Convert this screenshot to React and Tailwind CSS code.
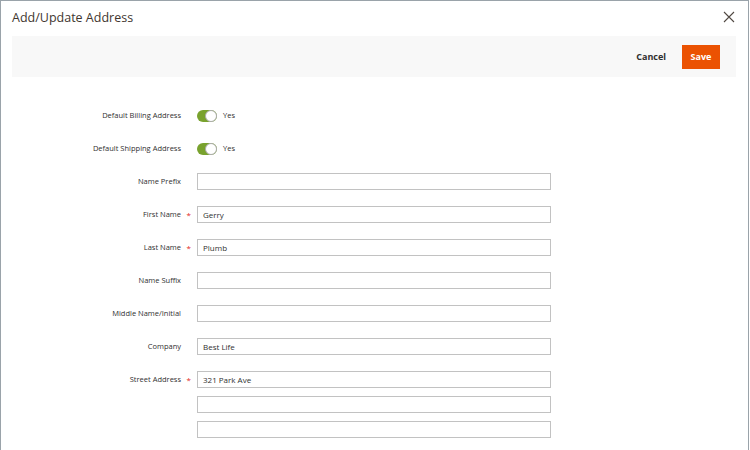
import { useState } from "react";

const Toggle = ({ on }) => (
  <div className="flex items-center gap-[6px]">
    <div
      className={`relative w-[20px] h-[12px] rounded-full ${
        on ? "bg-[#79a22e]" : "bg-[#d6d6d6]"
      }`}
    >
      <div
        className={`absolute top-0 ${
          on ? "right-0" : "left-0"
        } w-[12px] h-[12px] rounded-full bg-white border border-[#adadad]`}
      />
    </div>
    <span className="text-[7.5px] text-[#303030]">{on ? "Yes" : "No"}</span>
  </div>
);

const Row = ({ label, required, children }) => (
  <div className="flex items-start">
    <div className="relative w-[180px] h-[17px] flex items-center justify-end">
      <span className="text-[7.5px] text-[#303030]">{label}</span>
      {required && (
        <span className="absolute right-[-10px] text-[8px] text-[#e22626] leading-none top-[5px]">
          *
        </span>
      )}
    </div>
    <div className="ml-[16px] flex flex-col gap-[8px]">{children}</div>
  </div>
);

const Field = ({ value }) => (
  <input
    defaultValue={value}
    className="w-[354px] h-[17px] border border-[#c2c2c2] px-[5px] text-[8px] text-[#303030] outline-none bg-white"
  />
);

export default function App() {
  const [billing] = useState(true);
  const [shipping] = useState(true);

  return (
    <div className="w-[749px] h-[450px] overflow-hidden bg-white border-l border-t border-r border-[#9aa3aa] font-['Open_Sans',sans-serif]">
      <div className="h-[35px] flex items-center justify-between pl-[11px] pr-[13px]">
        <h1 className="text-[12.5px] text-[#41362f]">Add/Update Address</h1>
        <svg width="12" height="12" viewBox="0 0 12 12" className="text-[#514943] mb-[3px]">
          <path d="M1 1L11 11M11 1L1 11" stroke="currentColor" strokeWidth="1.1" />
        </svg>
      </div>

      <div className="ml-[11px] w-[724px] h-[41px] bg-[#f8f8f8] flex items-center justify-end pr-[16px] gap-[16px]">
        <button className="text-[9px] font-bold text-[#303030]">Cancel</button>
        <button className="w-[38px] h-[24px] bg-[#eb5202] text-white text-[9px] font-bold">
          Save
        </button>
      </div>

      <form className="mt-[30px] flex flex-col gap-[16px]">
        <Row label="Default Billing Address">
          <div className="h-[17px] flex items-center">
            <Toggle on={billing} />
          </div>
        </Row>
        <Row label="Default Shipping Address">
          <div className="h-[17px] flex items-center">
            <Toggle on={shipping} />
          </div>
        </Row>
        <Row label="Name Prefix">
          <Field />
        </Row>
        <Row label="First Name" required>
          <Field value="Gerry" />
        </Row>
        <Row label="Last Name" required>
          <Field value="Plumb" />
        </Row>
        <Row label="Name Suffix">
          <Field />
        </Row>
        <Row label="Middle Name/Initial">
          <Field />
        </Row>
        <Row label="Company">
          <Field value="Best Life" />
        </Row>
        <Row label="Street Address" required>
          <Field value="321 Park Ave" />
          <Field />
          <Field />
        </Row>
      </form>
    </div>
  );
}
